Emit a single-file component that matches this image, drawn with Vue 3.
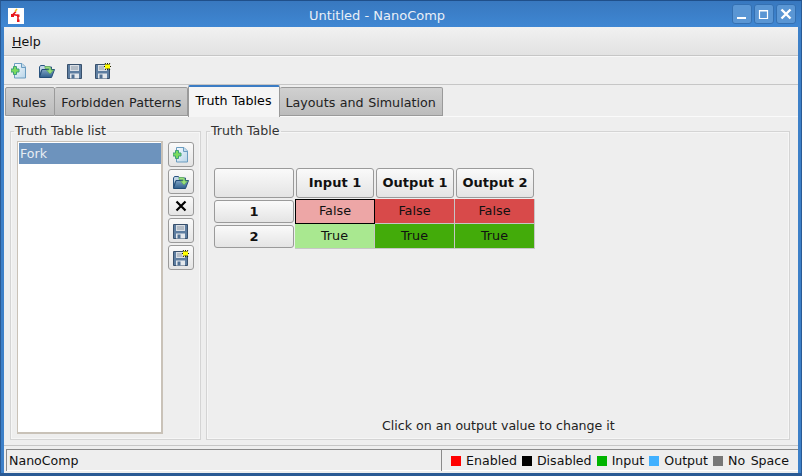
<template>
  <div class="window">
    <svg class="defs" width="0" height="0">
      <defs>
        <linearGradient id="doc-fill" x1="0" y1="0" x2="1" y2="1">
          <stop offset="0" stop-color="#f7fbfe" />
          <stop offset="1" stop-color="#b7d4e8" />
        </linearGradient>
        <linearGradient id="folder-fill" x1="0" y1="0" x2="0" y2="1">
          <stop offset="0" stop-color="#7fa3c4" />
          <stop offset="1" stop-color="#2f5f8d" />
        </linearGradient>
        <symbol id="ic-new" viewBox="0 0 16 16">
          <path d="M3.500 .5h7.500l3.500 3.500v11h-11z" fill="url(#doc-fill)" stroke="#6a9cc0" />
          <path d="M10.500 .5v4h4" fill="#c6dcec" stroke="#6a9cc0" />
          <path d="M2.500 3.500h3v2.500h2.500v3H5.500v2.500h-3V9H0V6h2.500z" fill="#7bdc5e" stroke="#3f9f7a" />
        </symbol>
        <symbol id="ic-open" viewBox="0 0 16 16">
          <path d="M.5 4l1-1.500h4l1 1.500h6v3h-10l-2 7z" fill="#c2d5e6" stroke="#2a5480" />
          <path d="M.5 14.500l2.500-8h12.500l-3 8z" fill="url(#folder-fill)" stroke="#234d78" />
          <path d="M6 3.500h4.500l1.500 2v1.500h2.500l-3.500 4-3.500-4H10V5.500H6z" fill="#9be07a" stroke="#57a65a" stroke-width=".7" />
        </symbol>
        <symbol id="ic-save" viewBox="0 0 16 16">
          <path d="M.5 1.500h14v14H.5z" fill="#5d7da0" stroke="#38506c" />
          <path d="M3 2h9v6H3z" fill="#d9dee4" />
          <path d="M4 4h7M4 6h7" stroke="#8d9aa8" />
          <path d="M3 10.500h9v5H3z" fill="#e4e8ec" />
          <path d="M4.500 11.500h3v4h-3z" fill="#4f6f92" />
        </symbol>
        <symbol id="ic-saveas" viewBox="0 0 16 16">
          <path d="M.5 1.500h14v14H.5z" fill="#5d7da0" stroke="#38506c" />
          <path d="M3 2h9v6H3z" fill="#d9dee4" />
          <path d="M4 4h5M4 6h5" stroke="#8d9aa8" />
          <path d="M3 10.500h9v5H3z" fill="#e4e8ec" />
          <path d="M4.500 11.500h3v4h-3z" fill="#4f6f92" />
          <path d="M12.500 0v7M9 3.500h7M10 0l5 7M15 0l-5 7" stroke="#222200" />
          <path d="M10 1.500h5v4h-5z" fill="#ffff00" />
        </symbol>
      </defs>
    </svg>

    <header class="titlebar">
      <span class="app-icon">
        <svg width="16" height="16" viewBox="0 0 16 16">
          <rect width="16" height="16" fill="#fff" />
          <path d="M8 3.500L5 6.500l5 1v5" fill="none" stroke="#e8161a" stroke-width="1.600" />
          <path d="M3 6h3v3H3zM9 6.500h2.500V9H9zM9 11.500h2.500V14H9z" fill="#e8161a" />
          <path d="M7 3.500L9 1" stroke="#f0c020" stroke-width="1.500" />
        </svg>
      </span>
      <span class="title">Untitled - NanoComp</span>
      <div class="win-buttons">
        <button class="win-btn">
          <svg width="12" height="12" viewBox="0 0 12 12"><path d="M1 9h9v2H1z" fill="#fff" /></svg>
        </button>
        <button class="win-btn">
          <svg width="12" height="12" viewBox="0 0 12 12"><path d="M1.500 2.500h8v8h-8z" fill="none" stroke="#fff" stroke-width="1.200" /><path d="M1 2h9v1.500H1z" fill="#fff" /></svg>
        </button>
        <button class="win-btn">
          <svg width="12" height="12" viewBox="0 0 12 12"><path d="M1.500 1.500l9 9M10.500 1.500l-9 9" stroke="#fff" stroke-width="2.400" /></svg>
        </button>
      </div>
    </header>

    <div class="body">
      <nav class="menubar"><span><u>H</u>elp</span></nav>

      <div class="toolbar">
        <svg v-for="icon in toolIcons" :key="icon" class="tool-icon" width="16" height="16">
          <use :href="`#ic-${icon}`" />
        </svg>
      </div>

      <div class="tabs">
        <div
          v-for="tab in tabs"
          :key="tab"
          class="tab"
          :class="{ active: tab === 'Truth Tables' }"
        >{{ tab }}</div>
      </div>

      <main class="panel">
        <fieldset class="group list-group">
          <legend>Truth Table list</legend>
          <div class="list-row">
            <div class="list">
              <div class="list-item">Fork</div>
            </div>
            <div class="side-buttons">
              <button v-for="icon in sideIcons" :key="icon" class="side-btn" :class="{ small: icon === 'x' }">
                <svg v-if="icon === 'x'" width="14" height="14" viewBox="0 0 14 14">
                  <path d="M2.500 2.500l9 9M11.500 2.500l-9 9" stroke="#000" stroke-width="2.200" />
                </svg>
                <svg v-else width="16" height="16"><use :href="`#ic-${icon}`" /></svg>
              </button>
            </div>
          </div>
        </fieldset>

        <fieldset class="group table-group">
          <legend>Truth Table</legend>
          <div class="truth">
            <div class="head-row">
              <button class="th corner"></button>
              <button v-for="col in columns" :key="col" class="th">{{ col }}</button>
            </div>
            <div v-for="row in rows" :key="row.id" class="row">
              <button class="row-head">{{ row.id }}</button>
              <div
                v-for="(cell, i) in row.cells"
                :key="i"
                class="cell"
                :class="[cell.kind, { selected: cell.selected }]"
              >{{ cell.text }}</div>
            </div>
          </div>
          <p class="hint">Click on an output value to change it</p>
        </fieldset>
      </main>

      <footer class="statusbar">
        <div class="status-left">NanoComp</div>
        <div class="status-right">
          <span v-for="item in legend" :key="item.label" class="legend-item">
            <i class="swatch" :style="{ background: item.color }"></i>{{ item.label }}
          </span>
        </div>
      </footer>
    </div>
  </div>
</template>

<script setup>
const toolIcons = ['new', 'open', 'save', 'saveas']
const sideIcons = ['new', 'open', 'x', 'save', 'saveas']
const tabs = ['Rules', 'Forbidden Patterns', 'Truth Tables', 'Layouts and Simulation']
const columns = ['Input 1', 'Output 1', 'Output 2']

const rows = [
  {
    id: 1,
    cells: [
      { text: 'False', kind: 'false-light', selected: true },
      { text: 'False', kind: 'false-dark' },
      { text: 'False', kind: 'false-dark' }
    ]
  },
  {
    id: 2,
    cells: [
      { text: 'True', kind: 'true-light' },
      { text: 'True', kind: 'true-dark' },
      { text: 'True', kind: 'true-dark' }
    ]
  }
]

const legend = [
  { label: 'Enabled', color: '#ff0000' },
  { label: 'Disabled', color: '#000000' },
  { label: 'Input', color: '#00b400' },
  { label: 'Output', color: '#40b0ff' },
  { label: 'No Space', color: '#777777' }
]
</script>

<style>
html,
body {
  margin: 0;
  background: #2a5a94;
}
</style>

<style scoped>
.window {
  width: 802px;
  height: 476px;
  box-sizing: border-box;
  display: flex;
  flex-direction: column;
  font-family: "DejaVu Sans", sans-serif;
  font-size: 12.6px;
  color: #111;
  background: #3d80c8;
  border: 1px solid #2a5a94;
  border-top-color: #1f4f8a;
  border-bottom-width: 3px;
  overflow: hidden;
}

.defs {
  position: absolute;
}

.titlebar {
  height: 26px;
  flex: none;
  display: flex;
  align-items: center;
  padding: 0 5px 0 7px;
  background: linear-gradient(#3878bf, #3f87d3);
}

.app-icon {
  display: flex;
  margin-top: 3px;
}

.title {
  flex: 1;
  text-align: center;
  color: #e9eff7;
  font-size: 13px;
  margin: 2px 0 0 -2px;
}

.win-buttons {
  display: flex;
  gap: 2px;
}

.win-btn {
  width: 20px;
  height: 20px;
  padding: 0;
  display: flex;
  align-items: center;
  justify-content: center;
  background: #5a96d4;
  border: 1px solid #3470b2;
  border-radius: 3px;
}

.body {
  flex: 1;
  margin: 0 3px;
  display: flex;
  flex-direction: column;
  background: #eeeeee;
  min-height: 0;
}

.menubar {
  height: 29px;
  flex: none;
  box-sizing: border-box;
  display: flex;
  align-items: center;
  padding-left: 8px;
  background: linear-gradient(#f1f1f1, #e2e2e2);
  border-bottom: 1px solid #c6c6c6;
}

.toolbar {
  height: 29px;
  flex: none;
  box-sizing: border-box;
  display: flex;
  align-items: center;
  gap: 12px;
  padding-left: 7px;
  border-top: 1px solid #f8f8f8;
  border-bottom: 1px solid #c6c6c6;
}

.tool-icon {
  display: block;
}

.tabs {
  height: 31px;
  flex: none;
  box-sizing: border-box;
  display: flex;
  align-items: flex-end;
  padding-left: 1px;
  font-size: 12.7px;
  word-spacing: 0.5px;
}

.tab {
  height: 29px;
  box-sizing: border-box;
  padding: 1px 6px 0;
  display: flex;
  align-items: center;
  white-space: nowrap;
  background: linear-gradient(#d0d0d0, #bcbcbc);
  border: 1px solid #9a9a9a;
  border-left-width: 0;
  border-radius: 2px 2px 0 0;
  color: #222;
}

.tab:first-child {
  border-left-width: 1px;
  padding-right: 8px;
}

.tab.active {
  height: 32px;
  margin-bottom: -1px;
  position: relative;
  background: #f5f5f5;
  border-left-width: 1px;
  border-top: 2px solid #3b7cc4;
  border-bottom: 0;
  color: #000;
  padding: 0 7px 3px 6px;
}

.panel {
  flex: 1;
  min-height: 0;
  display: flex;
  gap: 5px;
  padding: 7px 8px 5px 6px;
  background: #eeeeee;
  border-top: 1px solid #fafafa;
  border-bottom: 1px solid #c6c6c6;
}

.group {
  margin: 0;
  padding: 0;
  min-width: 0;
  border: 1px solid #d4d4d4;
  box-shadow: inset 0 0 0 1px #f6f6f6;
}

.group legend {
  padding: 0 1px;
  margin-left: 3px;
  color: #333;
  line-height: 14px;
}

.list-group {
  width: 191px;
  box-sizing: border-box;
  flex: none;
}

.list-row {
  display: flex;
  gap: 5px;
  padding: 3px 6px 5px;
  height: 100%;
  box-sizing: border-box;
}

.list {
  width: 146px;
  box-sizing: border-box;
  background: #fff;
  border: 2px solid #c9c2b8;
  border-width: 1px 2px 2px 1px;
  padding: 1px 0 1px 1px;
}

.list-item {
  height: 21px;
  line-height: 21px;
  padding-left: 1px;
  background: #6d93bd;
  color: #e8edf3;
}

.side-buttons {
  display: flex;
  flex-direction: column;
  gap: 2px;
  padding-top: 1px;
}

.side-btn {
  width: 26px;
  height: 25px;
  padding: 0;
  display: flex;
  align-items: center;
  justify-content: center;
  background: linear-gradient(#fafafa, #e4e4e4);
  border: 1px solid #9a9a9a;
  border-radius: 3px;
}

.side-btn.small {
  height: 20px;
}

.table-group {
  flex: 1;
  display: flex;
  flex-direction: column;
}

.truth {
  margin: 30px 0 0 7px;
}

.head-row {
  display: flex;
  gap: 2px;
  margin-bottom: 1px;
}

.th,
.row-head {
  padding: 0;
  font-family: inherit;
  font-size: 13px;
  font-weight: 700;
  color: #111;
  background: linear-gradient(#fafafa, #e4e4e4);
  border: 1px solid #9a9a9a;
  border-radius: 3px;
}

.th {
  width: 78px;
  height: 30px;
  padding-bottom: 2px;
}

.th.corner {
  width: 80px;
}

.row {
  display: flex;
  height: 25px;
}

.row-head {
  width: 80px;
  height: 23px;
  margin: 1px 1px 0 0;
}

.cell {
  width: 80px;
  height: 25px;
  box-sizing: border-box;
  display: flex;
  align-items: center;
  justify-content: center;
  padding-bottom: 2px;
  font-size: 12.8px;
  border: 1px solid #c6c6c6;
  border-width: 0 1px 1px 0;
}

.cell.selected {
  border: 1px solid #000;
}

.false-light {
  background: #eda6a6;
}

.false-dark {
  background: #d84a4a;
}

.true-light {
  background: #a9e890;
}

.true-dark {
  background: #43ab0a;
}

.hint {
  margin: auto 0 6px;
  padding-left: 175px;
  color: #222;
  text-align: left;
}

.statusbar {
  height: 27px;
  flex: none;
  display: flex;
  gap: 0;
  padding: 3px 0 0 2px;
  box-sizing: border-box;
}

.status-left,
.status-right {
  border-top: 1px solid #8a8a8a;
  border-left: 1px solid #8a8a8a;
  box-shadow: inset 0 -1px 0 #fff;
  display: flex;
  align-items: center;
  white-space: nowrap;
  margin-bottom: 2px;
}

.status-left {
  width: 435px;
  box-sizing: border-box;
  padding-left: 2px;
}

.status-right {
  flex: 1;
  gap: 5px;
  padding-left: 9px;
  word-spacing: 1.5px;
}

.legend-item {
  display: flex;
  align-items: center;
}

.swatch {
  display: block;
  width: 10px;
  height: 10px;
  margin-right: 5px;
}
</style>
